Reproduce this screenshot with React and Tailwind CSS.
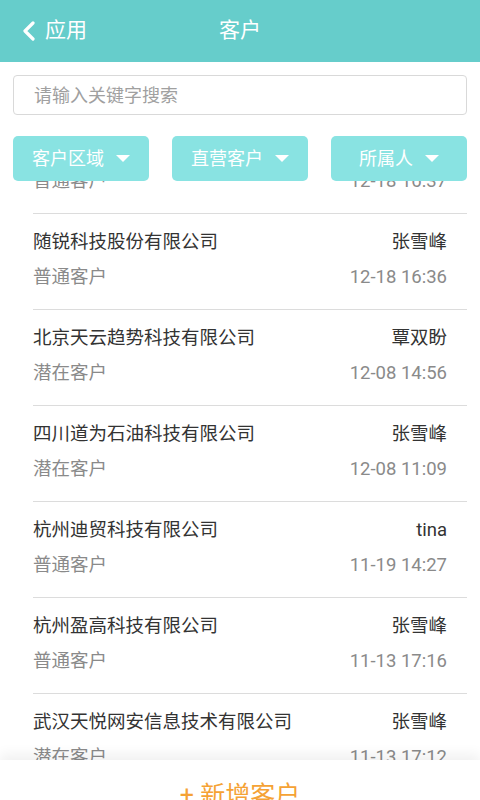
const customers = [
  { name: "", owner: "", type: "普通客户", time: "12-18 16:37" },
  { name: "随锐科技股份有限公司", owner: "张雪峰", type: "普通客户", time: "12-18 16:36" },
  { name: "北京天云趋势科技有限公司", owner: "覃双盼", type: "潜在客户", time: "12-08 14:56" },
  { name: "四川道为石油科技有限公司", owner: "张雪峰", type: "潜在客户", time: "12-08 11:09" },
  { name: "杭州迪贸科技有限公司", owner: "tina", type: "普通客户", time: "11-19 14:27" },
  { name: "杭州盈高科技有限公司", owner: "张雪峰", type: "普通客户", time: "11-13 17:16" },
  { name: "武汉天悦网安信息技术有限公司", owner: "张雪峰", type: "潜在客户", time: "11-13 17:12" },
];

const filters = ["客户区域", "直营客户", "所属人"];

const Caret = () => (
  <svg width="14" height="8" viewBox="0 0 14 8" className="ml-3">
    <path d="M0 0 L14 0 L7 7 Z" fill="white" />
  </svg>
);

const App = () => {
  return (
    <div
      className="w-[480px] h-[800px] bg-white relative overflow-hidden flex flex-col"
      style={{ fontFamily: "Roboto, 'Noto Sans CJK SC', sans-serif" }}
    >
      <div className="h-[62px] bg-[#66cdcb] relative flex items-center justify-center shrink-0">
        <div className="absolute left-[22px] top-0 h-full flex items-center text-white text-[21px]">
          <svg width="14" height="20" viewBox="0 0 14 20" className="mr-[9px]">
            <path d="M11 2 L3 10 L11 18" stroke="white" strokeWidth="3.2" fill="none" strokeLinecap="round" strokeLinejoin="round" />
          </svg>
          <span>应用</span>
        </div>
        <span className="text-white text-[21px]">客户</span>
      </div>

      <div className="px-[13px] pt-[13px] shrink-0">
        <div className="h-[40px] border border-[#d9d9d9] rounded-[4px] flex items-center pl-[20px] text-[18px] text-[#a0a0a0]">
          请输入关键字搜索
        </div>
      </div>

      <div className="px-[13px] pt-[21px] flex justify-between shrink-0">
        {filters.map((f) => (
          <div
            key={f}
            className="w-[136px] h-[45px] rounded-[5px] bg-[#89e3e2] flex items-center justify-center text-white text-[18px]"
          >
            <span>{f}</span>
            <Caret />
          </div>
        ))}
      </div>

      <div className="flex-1 overflow-hidden">
        <div className="mt-[-63px]">
          {customers.map((c, i) => (
            <div key={i} className="ml-[33px] mr-[13px] h-[96px] border-b border-[#dcdcdc] flex flex-col pr-[20px] pt-[15px]">
              <div className="flex justify-between text-[18.5px] text-[#333333] h-[27px] leading-[27px]">
                <span>{c.name}</span>
                <span>{c.owner}</span>
              </div>
              <div className="flex justify-between text-[18.5px] text-[#8a8a8a] h-[27px] leading-[27px] mt-[8px]">
                <span>{c.type}</span>
                <span>{c.time}</span>
              </div>
            </div>
          ))}
        </div>
      </div>

      <div className="absolute left-0 right-0 bottom-0 h-[40px] bg-white shadow-[0_-6px_12px_rgba(0,0,0,0.06)] flex justify-center">
        <span className="text-[#f5a235] text-[25px] leading-none mt-[23px]">+ 新增客户</span>
      </div>
    </div>
  );
};

export default App;
